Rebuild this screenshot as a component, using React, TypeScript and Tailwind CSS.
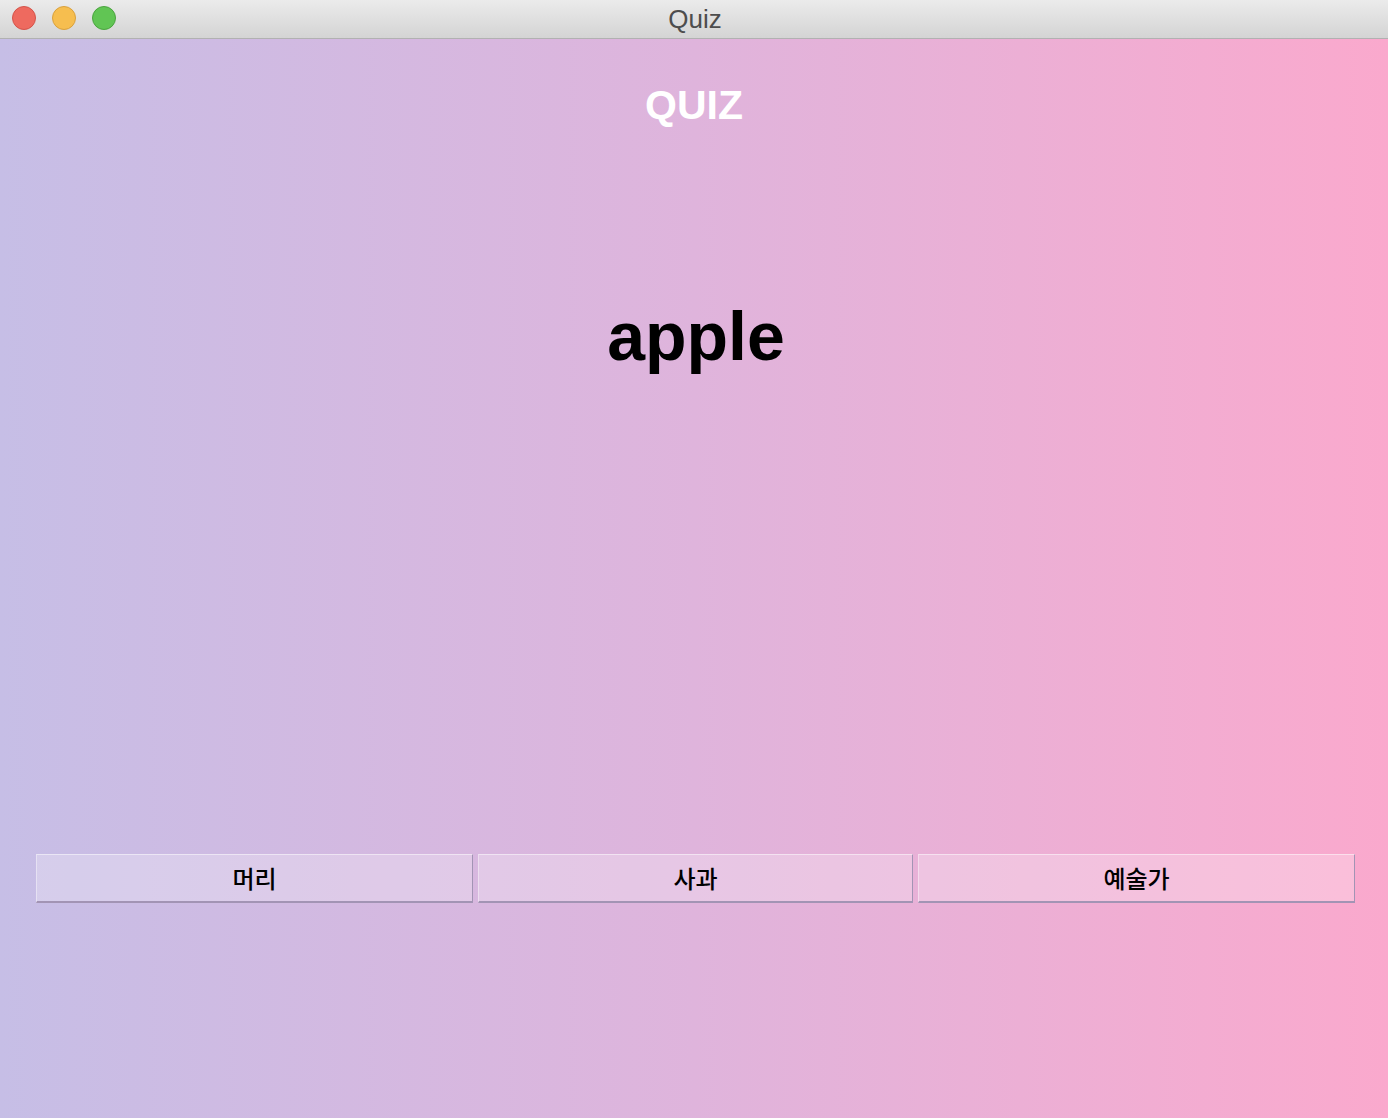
export default function App() {
  const choices = ["머리", "사과", "예술가"];

  return (
    <div className="flex h-screen w-full flex-col overflow-hidden font-['Liberation_Sans',sans-serif]">
      {/* window title bar */}
      <div className="relative flex h-[39px] shrink-0 items-center justify-center border-b border-[#b1b1b1] bg-linear-to-b from-[#ebebeb] to-[#d4d4d4]">
        <div className="absolute left-[12px] top-[6px] flex gap-[16px]">
          <span className="h-[24px] w-[24px] rounded-full border border-[#d4544a] bg-[#ee6a5f]" />
          <span className="h-[24px] w-[24px] rounded-full border border-[#d9a13d] bg-[#f6be4f]" />
          <span className="h-[24px] w-[24px] rounded-full border border-[#4ba43f] bg-[#61c554]" />
        </div>
        <span className="ml-[2px] text-[26px] leading-none text-[#4d4d4d]">Quiz</span>
      </div>

      {/* quiz body */}
      <div className="flex flex-1 flex-col items-center bg-linear-to-r from-[#c6bee6] via-[#dfb4dc] to-[#faa9cd]">
        <h1 className="mt-[46px] text-[41px] font-bold leading-none text-white">QUIZ</h1>
        <p className="ml-[4px] mt-[176px] text-[68px] font-bold leading-none text-black">apple</p>

        <div className="mt-[484px] grid w-full grid-cols-[437px_435px_437px] gap-[5px] pl-[36px] pr-[33px]">
          {choices.map((c) => (
            <button
              key={c}
              className="h-[49px] border border-t-white/50 border-l-white/40 border-b-2 border-b-[#a294b4] border-r-[#a294b4] bg-white/25 font-['Noto_Sans_CJK_KR',sans-serif] text-[24px] font-medium text-black"
            >
              {c}
            </button>
          ))}
        </div>
      </div>
    </div>
  );
}
